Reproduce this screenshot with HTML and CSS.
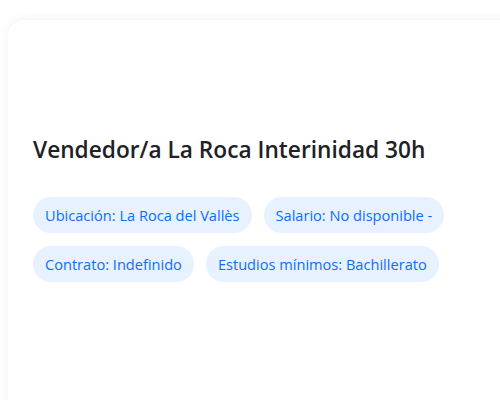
FILE: index.html
```html
<!DOCTYPE html>
<html>
<head>
  <title>Oferta de empleo</title>
  <link rel="stylesheet" href="styles.css">
</head>
<body>
  <div class="job-card">
    <div class="job-header"></div>
    <h2 class="job-title">Vendedor/a La Roca Interinidad 30h</h2>
    <div class="tags">
      <span class="tag">Ubicación: La Roca del Vallès</span>
      <span class="tag">Salario: No disponible -</span>
      <span class="tag">Contrato: Indefinido</span>
      <span class="tag">Estudios mínimos: Bachillerato</span>
    </div>
  </div>
</body>
</html>
```

FILE: styles.css
```css
html {
  overflow: hidden;
}
body {
  margin: 0;
  padding: 20px 0 0 8px;
  background-color: #fff;
  font-family: "Open Sans", "Noto Sans", Arial, sans-serif;
  color: #1e2125;
}
.job-card {
  width: 520px;
  min-height: 420px;
  background-color: #fff;
  border-radius: 16px;
  box-shadow: 0 0 12px rgba(0, 0, 0, 0.06);
  padding: 0 25px;
  box-sizing: border-box;
}
.job-header {
  height: 114px;
}
.job-title {
  margin: 0 0 31px 0;
  font-size: 22.7px;
  font-weight: 600;
  line-height: 32px;
}
.tags {
  display: flex;
  flex-wrap: wrap;
  gap: 13px 12px;
  width: 430px;
}
.tag {
  display: inline-block;
  padding: 0 12px;
  height: 36px;
  line-height: 36px;
  border-radius: 18px;
  background-color: #e7f1ff;
  color: #0d6efd;
  font-size: 14.6px;
  font-weight: 500;
}
```
